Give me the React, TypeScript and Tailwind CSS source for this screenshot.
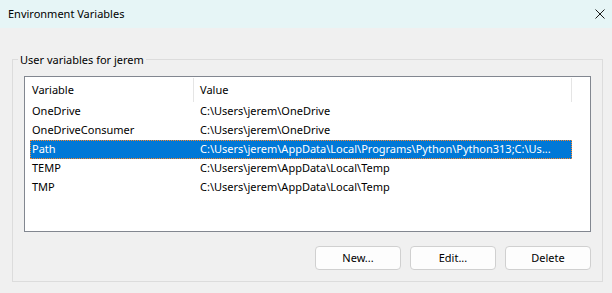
const rows: [string, string][] = [
  ["OneDrive", "C:\\Users\\jerem\\OneDrive"],
  ["OneDriveConsumer", "C:\\Users\\jerem\\OneDrive"],
  ["Path", "C:\\Users\\jerem\\AppData\\Local\\Programs\\Python\\Python313;C:\\Us..."],
  ["TEMP", "C:\\Users\\jerem\\AppData\\Local\\Temp"],
  ["TMP", "C:\\Users\\jerem\\AppData\\Local\\Temp"],
];

function Btn({ label }: { label: string }) {
  return (
    <button className="w-[86px] h-[24px] rounded-[4px] border border-[#d0d0d0] bg-[#fdfdfd] text-[11px] text-black flex items-center justify-center">
      {label}
    </button>
  );
}

export default function App() {
  return (
    <div className="w-[612px] h-[293px] bg-[#f0f0f0] text-[11px] text-black flex flex-col font-['Noto_Sans',sans-serif] overflow-hidden">
      <div className="h-[28px] bg-[#e6f5f6] flex items-center justify-between pl-[8px] pr-[7px] shrink-0">
        <span className="leading-[16px]">Environment Variables</span>
        <svg width="10" height="10" viewBox="0 0 10 10" className="block">
          <path d="M0.5 0.5 L9.5 9.5 M9.5 0.5 L0.5 9.5" stroke="#1a1a1a" strokeWidth="1" fill="none" />
        </svg>
      </div>
      <div className="pt-[31px] pl-[12px]">
        <div className="relative w-[591px] h-[223px] border border-[#dcdcdc] pt-[16px] px-[11px] pb-[11px] flex flex-col">
          <span className="absolute left-[5px] top-[-8px] px-[2px] bg-[#f0f0f0] leading-[16px]">
            User variables for jerem
          </span>
          <div className="h-[156px] border border-[#828790] bg-white flex flex-col">
            <div className="h-[25px] flex shrink-0">
              <div className="w-[169px] border-r border-[#e5e5e5] pl-[7px] flex items-center mt-[1px]">Variable</div>
              <div className="w-[378px] border-r border-[#e5e5e5] pl-[6px] flex items-center mt-[1px]">Value</div>
            </div>
            <div className="pl-[5px] flex flex-col">
              {rows.map(([name, value], i) => {
                const sel = i === 2;
                return (
                  <div
                    key={name}
                    className={
                      sel
                        ? "w-[542px] h-[19px] flex items-center border border-dotted border-[#ff8728] bg-[#0078d7] text-white"
                        : "w-[542px] h-[19px] flex items-center border border-transparent"
                    }
                  >
                    <div className="w-[169px] pl-[1px] whitespace-nowrap overflow-hidden">{name}</div>
                    <div className="flex-1 whitespace-nowrap overflow-hidden">{value}</div>
                  </div>
                );
              })}
            </div>
          </div>
          <div className="mt-[14px] flex justify-end gap-[9px]">
            <Btn label="New..." />
            <Btn label="Edit..." />
            <Btn label="Delete" />
          </div>
        </div>
      </div>
    </div>
  );
}
